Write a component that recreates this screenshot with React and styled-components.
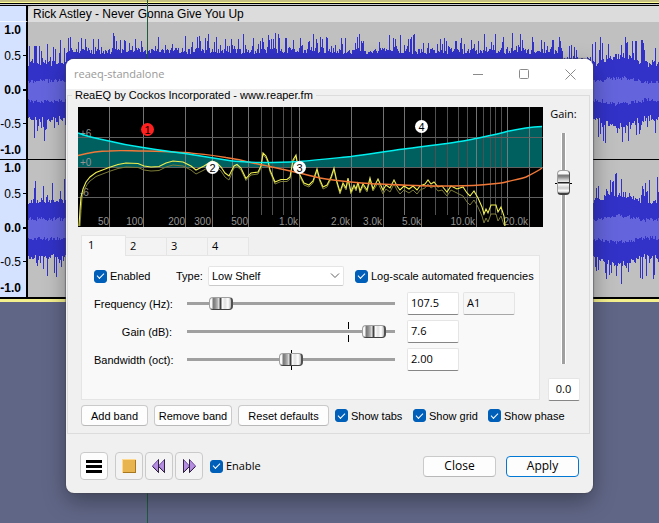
import React, { useState } from "react";
import styled, { createGlobalStyle, css } from "styled-components";

const arial = `"Liberation Sans", Arial, sans-serif`;
const segoe = `"Open Sans", "Noto Sans", sans-serif`;

const GlobalStyle = createGlobalStyle`
  *, *::before, *::after { box-sizing: border-box; }
  body { margin: 0; background: #606686; font-family: ${arial}; font-size: 11px; color: #000; }
  button, input, select { font: inherit; color: inherit; margin: 0; }
`;

/* ---------- Editor behind the dialog ---------- */

const Desktop = styled.main`
  position: relative;
  min-height: 100vh;
  overflow: hidden;
`;

const Track = styled.section`
  border-top: 2px solid #c6c084;
  border-bottom: 3px solid #f4f08e;
  background: #c0c0c0;
`;

const TrackEdge = styled.div`
  height: 4px;
  background: linear-gradient(#ffff96 0 1px, #000 1px 2px, #c8c8d2 2px 3px, #000 3px 4px);
`;

const TrackBody = styled.div`
  display: grid;
  grid-template-columns: 28px 1fr;
  border-bottom: 1px solid #000;
`;

const RulerHead = styled.div`
  background: #d4e1ff;
  border-right: 2px solid #000;
  border-bottom: 1px solid #f4f8ff;
`;

const ClipTitle = styled.h1`
  margin: 0;
  padding-left: 5px;
  height: 16px;
  border-top-left-radius: 5px;
  background: #dcdcdc;
  font: 12px/16px ${arial};
  white-space: nowrap;
`;

const Ruler = styled.div`
  display: grid;
  grid-template-rows: 15px 37px 32px 35px 18px;
  background: #d4e1ff;
  border-right: 2px solid #000;
  border-bottom: 1px solid #000;
  height: 138px;
`;

const Mark = styled.span`
  display: flex;
  align-items: center;
  justify-content: flex-end;
  gap: 2px;
  font: ${(p) => (p.$bold ? "bold" : "normal")} 12px/14px ${arial};
  &::after {
    content: "";
    width: 3px;
    height: ${(p) => (p.$thick ? 2 : 1)}px;
    background: ${(p) => (p.$tick ? "#000" : "transparent")};
  }
`;

const WaveArea = styled.div`
  height: 138px;
  border-bottom: 1px solid #000;
  overflow: hidden;
`;

const WaveSvg = styled.svg`
  display: block;
  width: 100%;
  height: 138px;
`;

const Cursor = styled.div`
  position: absolute;
  left: 147px;
  top: 0;
  bottom: 0;
  width: 1px;
  background: #1e5c3c;
`;

function wavePaths(seed) {
  let s = seed;
  const rnd = () => {
    s = (s * 16807) % 2147483647;
    return s / 2147483647;
  };
  let peaks = "";
  let rms = "";
  for (let x = 0; x < 631; x++) {
    const base = x < 38 ? 25 : x < 535 ? 37 : x < 565 ? 28 : 28 + 4 * Math.sin((x - 575) / 10);
    const spike = x < 38 || x > 565 ? 22 : 16;
    const up = base + rnd() * 6 + (rnd() > 0.65 ? rnd() * spike : 0);
    const down = base + rnd() * 6 + (rnd() > 0.65 ? rnd() * spike : 0);
    const soft = x < 575 ? 8 : 9 + 2 * Math.sin((x - 575) / 10);
    peaks += `M${x}.5 ${Math.round(69 - up)}V${Math.round(69 + down)}`;
    rms += `M${x}.5 ${Math.round(69 - soft - rnd() * 4)}V${Math.round(69 + soft + rnd() * 4)}`;
  }
  return [peaks, rms];
}

function Channel({ seed }) {
  const [peaks, rms] = wavePaths(seed);
  return (
    <>
      <Ruler>
        <Mark $bold>1.0</Mark>
        <Mark $tick>0.5</Mark>
        <Mark $bold $tick $thick>0.0</Mark>
        <Mark $tick>-0.5</Mark>
        <Mark $bold>-1.0</Mark>
      </Ruler>
      <WaveArea>
        <WaveSvg viewBox="0 0 631 138" preserveAspectRatio="none" shapeRendering="crispEdges" aria-hidden="true">
          <path d={peaks} stroke="#3232c8" />
          <path d={rms} stroke="#6464dc" />
        </WaveSvg>
      </WaveArea>
    </>
  );
}

/* ---------- Dialog frame ---------- */

const Dialog = styled.form`
  position: absolute;
  top: 59px;
  left: 66px;
  right: 66px;
  background: #f0f0f0;
  border-radius: 8px;
  overflow: hidden;
  box-shadow: 0 0 1px 1px rgba(70, 70, 80, 0.5), 0 8px 22px rgba(0, 0, 0, 0.35);
`;

const TitleBar = styled.header`
  display: flex;
  align-items: center;
  height: 30px;
  padding-left: 8px;
  background: #fff;
`;

const Title = styled.h2`
  margin: 0;
  flex: 1;
  font: 11px/16px ${segoe};
  color: #999;
`;

const CaptionButton = styled.button`
  display: grid;
  place-items: center;
  width: 46px;
  height: 30px;
  padding: 0;
  border: 0;
  background: none;
  color: #8a8a8a;
`;

const Group = styled.fieldset`
  margin: 0 3px 0 1px;
  padding: 6px 0 7px 4px;
  border: 1px solid #dcdcdc;
  min-width: 0;
`;

const Legend = styled.legend`
  padding: 0 3px;
  line-height: 12px;
`;

const Columns = styled.div`
  display: grid;
  grid-template-columns: minmax(0, 1fr) 46px;
  padding-left: 6px;
`;

const GraphSvg = styled.svg`
  display: block;
  width: 100%;
  height: auto;
  background: #000;
`;

/* ---------- Controls ---------- */

const PushButton = styled.button`
  flex: none;
  height: 21px;
  width: ${(p) => p.$width}px;
  padding: 0;
  border: 1px solid ${(p) => (p.$primary ? "#0078d4" : "#cacaca")};
  border-bottom-color: ${(p) => (p.$primary ? "#0078d4" : "#b8b8b8")};
  border-radius: 4px;
  background: #fdfdfd;
  line-height: 18px;
  white-space: nowrap;
  ${(p) => p.$large && css`font: 12px/18px ${segoe};`}
`;

const ToolButton = styled.button`
  display: grid;
  place-items: center;
  width: 28px;
  height: 28px;
  padding: 0;
  border: 1px solid #cacaca;
  border-radius: 4px;
  background: ${(p) => (p.$plain ? "#fdfdfd" : "#f3f3f3")};
`;

const CheckLabel = styled.label`
  display: flex;
  align-items: center;
  gap: 3px;
  line-height: 14px;
  white-space: nowrap;
  ${(p) => p.$segoe && css`font-family: ${segoe};`}
`;

const CheckInput = styled.input.attrs({ type: "checkbox" })`
  appearance: none;
  display: grid;
  place-items: center;
  flex: none;
  width: 13px;
  height: 13px;
  border: 1px solid #868686;
  border-radius: 3px;
  background: #fff;
  &:checked {
    border-color: #005fb8;
    background: #005fb8;
  }
  &:checked::after {
    content: "";
    width: 7px;
    height: 4px;
    margin-bottom: 2px;
    border: solid #fff;
    border-width: 0 0 1px 1px;
    transform: rotate(-45deg);
  }
`;

function Check({ children, segoe: useSegoe }) {
  return (
    <CheckLabel $segoe={useSegoe}>
      <CheckInput defaultChecked />
      {children}
    </CheckLabel>
  );
}

const TextBox = styled.input`
  width: 100%;
  min-width: 0;
  height: 23px;
  padding: 0 3px 3px;
  border: 1px solid #e5e5e5;
  border-bottom-color: ${(p) => (p.readOnly ? "#a8a8a8" : "#868686")};
  border-radius: 2px;
  background: ${(p) => (p.readOnly ? "#f7f7f7" : "#fff")};
  text-align: ${(p) => (p.$center ? "center" : "left")};
  font: 11px/16px ${segoe};
`;

const Select = styled.select`
  appearance: none;
  height: 20px;
  padding: 0 3px;
  border: 1px solid #e5e5e5;
  border-bottom-color: #cacaca;
  border-radius: 2px;
  background: transparent;
  width: 100%;
`;

const SelectBox = styled.span`
  display: grid;
  align-items: center;
  background: #fff;
  > * { grid-area: 1 / 1; }
  > svg { justify-self: end; margin-right: 4px; pointer-events: none; }
`;

const Slider = styled.input.attrs({ type: "range", min: 0, max: 100, step: "any" })`
  appearance: none;
  width: 100%;
  height: 20px;
  background:
    linear-gradient(#a0a0a0, #a0a0a0) center / 100% 3px no-repeat,
    linear-gradient(#f9f9f9, #f9f9f9) center / 100% 6px no-repeat,
    linear-gradient(${(p) => (p.$tick ? "#000, #000" : "transparent, transparent")})
      ${(p) => p.$tick || "0%"} 0 / 1px 100% no-repeat;
  &::-webkit-slider-thumb {
    appearance: none;
    width: 24px;
    height: 13px;
    border: 1px solid #a0a0a0;
    border-right: 2px solid #505050;
    border-bottom-color: #404040;
    border-radius: 4px;
    background: linear-gradient(90deg, #f8f8f8 0 2px, #777 3px, #8a8a8a 5px, #c0c0c0 8px, #eee 9px, #444 10px 11px, #fff 12px, #e0e0e0 15px, #fff 18px, #bbb 21px);
  }
`;

const VerticalSlider = styled.input.attrs({ type: "range", min: 0, max: 100, step: "any" })`
  appearance: none;
  writing-mode: vertical-lr;
  direction: rtl;
  width: 17px;
  height: 231px;
  margin: 12px 0 14px;
  background:
    linear-gradient(#a0a0a0, #a0a0a0) center / 3px 100% no-repeat,
    linear-gradient(#000, #000) 0 50px / 100% 1px no-repeat,
    linear-gradient(#fff, #fff) center / 5px 100% no-repeat;
  &::-webkit-slider-thumb {
    appearance: none;
    width: 13px;
    height: 25px;
    border: 1px solid #a0a0a0;
    border-right-color: #505050;
    border-bottom: 2px solid #404040;
    border-radius: 4px;
    background: linear-gradient(#f8f8f8 0 3px, #777 4px, #8a8a8a 6px, #d0d0d0 9px, #eee 11px, #222 11px 12px, #fff 13px, #ccc 17px, #fff 20px, #999 22px);
  }
`;

const GainColumn = styled.div`
  display: flex;
  flex-direction: column;
  align-items: center;
  padding-right: 5px;
`;

const GainLabel = styled.label`
  line-height: 14px;
  font-family: ${segoe};
`;

const GainValue = styled.div`
  width: 32px;
`;

/* ---------- Band tabs ---------- */

const Controls = styled.div`
  margin: 8px 3px 0;
`;

const TabList = styled.div`
  display: flex;
  align-items: flex-end;
  height: 20px;
`;

const Tab = styled.button`
  width: ${(p) => (p.$active ? 45 : 42)}px;
  height: ${(p) => (p.$active ? 21 : 18)}px;
  align-self: ${(p) => (p.$active ? "flex-start" : "flex-end")};
  padding: 0 ${(p) => (p.$active ? 6 : 4)}px 2px;
  margin-right: -1px;
  border: 1px solid #e5e5e5;
  border-bottom: 0;
  background: ${(p) => (p.$active ? "#f9f9f9" : "#f3f3f3")};
  z-index: ${(p) => (p.$active ? 1 : 0)};
  text-align: left;
  line-height: 16px;
  font-family: ${segoe};
`;

const Panel = styled.div`
  display: grid;
  grid-template-columns: minmax(0, 1fr);
  gap: 5px;
  padding: 10px 12px 28px;
  border: 1px solid #e5e5e5;
  background: #f9f9f9;
`;

const OptionsRow = styled.div`
  display: grid;
  grid-template-columns: 82px 32px 136px auto;
  align-items: center;
  margin-bottom: 1px;
  > :last-child { margin-left: 11px; }
`;

const FieldRow = styled.div`
  display: grid;
  grid-template-columns: 78px minmax(0, 1fr) 52px 56px;
  align-items: center;
  padding-right: 12px;
  > :nth-child(2) { margin: 0 12px 0 15px; width: auto; }
  > :nth-child(4) { margin-left: 4px; width: 52px; }
`;

const FieldLabel = styled.label`
  text-align: right;
  line-height: 14px;
  white-space: nowrap;
`;

const Actions = styled.div`
  display: flex;
  align-items: center;
  gap: 6px;
  margin-top: 5px;
`;

const ViewOptions = styled.div`
  display: grid;
  grid-template-columns: 78px 75px auto;
`;

const Footer = styled.footer`
  display: flex;
  align-items: center;
  gap: 7px;
  padding: 18px 14px 13px;
`;

const Transport = styled.div`
  display: flex;
  gap: 2px;
`;

const DialogButtons = styled.div`
  display: flex;
  gap: 10px;
  margin-left: auto;
`;

/* ---------- Equalizer graph ---------- */

const majorLines = [31, 65, 107, 134, 170, 221, 273, 305, 343, 398, 451];
const midLines = [154, 326, 429];
const minorLines = [183, 194, 205, 213, 357, 369, 380, 389, 405, 412, 417, 423];
const freqLabels = [
  [31, "50"], [65, "100"], [107, "200"], [133, "300"], [170, "500"], [220, "1.0k"],
  [272, "2.0k"], [304, "3.0k"], [343, "5.0k"], [397, "10.0k"], [450, "20.0k"],
];
const nodes = [
  [69, 22, "1", "#ff2020"], [134, 60, "2", "#fff"], [221, 60, "3", "#fff"], [343, 19, "4", "#fff"],
];
const phase = "M0 26C10 30 20 32 31 34C43 37 54 39 65 40.500C80 43 94 45 107 46.500C122 49 136 51 148 53C166 56 192 56 221 54.500C240 53 258 51 273 49.500C292 47 310 44 326 42C342 40 356 38 369 36.500C380 35 390 33 398 31.500C410 29 420 27 429 24.500C440 22 452 20 464 19.500";
const gainCurve = "M0 48.500C10 46 20 44 31 44C43 43 54 44 65 44C80 44 94 45 107 45.500C122 47 136 48 148 50.500C158 52 164 53 170 55C178 57 186 58 194 60C204 62 212 64 221 66C230 68 236 70 242 71C253 73 263 74 273 75C283 76 292 77 302 77C322 78 342 79 362 79C376 79 390 79 402 78C412 77 420 77 428 75C436 73 442 72 448 70C454 67 460 64 464 61";
const spectrum = [
  [1, 119], [2, 103], [3, 90], [5, 82], [8, 75], [12, 70], [18, 65.5], [31, 60.500], [40, 57.5], [48, 56], [60, 56.5], [66, 59], [73, 60], [81, 59.5],
  [88, 56], [95, 54], [105, 55], [113, 59], [118, 63], [126, 59], [134, 54], [139, 56], [143, 60], [147, 66], [151, 69], [156, 59], [159, 57.5], [163, 61],
  [168, 71.5], [173, 66], [180, 65], [183, 59], [185, 46], [188, 49], [190, 54], [192, 63], [197, 75], [203, 72.500], [209, 72.5], [212, 70], [215, 53], [218, 48],
  [220, 60], [222, 68], [226, 76], [231, 78], [235, 74], [239, 62], [242, 73], [245, 80], [249, 78], [253, 70], [256, 61], [259, 75], [262, 85], [265, 76],
  [268, 81], [270, 71], [273, 85], [276, 78], [278, 82], [280, 75], [282, 84], [285, 77], [289, 83], [292, 71], [295, 82], [300, 72], [305, 83], [308, 78],
  [312, 81], [316, 73], [319, 79], [322, 83], [326, 79], [331, 82], [335, 79], [339, 83], [342, 79], [347, 77], [350, 73], [353, 77], [356, 75], [360, 80],
  [364, 79], [369, 85], [373, 79], [379, 82], [385, 80], [389, 86], [392, 89], [396, 84], [400, 91], [404, 100], [406, 107], [408, 102], [410, 106], [413, 98],
  [418, 98], [420, 105], [423, 100], [426, 109], [427, 119],
];
const toPoints = (list) => list.map(([x, y]) => `${x},${y}`).join(" ");
const shaded = spectrum.map(([x, y]) => {
  const drop = x < 10 ? x / 3 : x < 155 ? 4 : x < 300 ? 2 : x < 385 ? 4 : 9;
  return [x < 10 ? x + 1 : x, Math.min(119, y + drop)];
});

function Graph() {
  return (
    <GraphSvg viewBox="0 0 465 120" role="img" aria-label="Equalizer curve">
      <path d={`${phase}V60H0Z`} fill="#006060" />
      <g shapeRendering="crispEdges" fill="none">
        <path d={majorLines.map((x) => `M${x}.5 0V120`).join("")} stroke="#808080" strokeOpacity=".9" />
        <path d={midLines.map((x) => `M${x}.5 0V108`).join("")} stroke="#808080" strokeOpacity=".9" />
        <path d={minorLines.map((x) => `M${x}.5 0V108`).join("")} stroke="#505050" />
        <path d="M0 30.500H465M0 60.500H465M0 90.500H465" stroke="#606060" />
      </g>
      <g fontFamily="Liberation Sans, Arial, sans-serif" fontSize="10" fill="#949494">
        <text x="2" y="30">+6</text>
        <text x="2" y="59">+0</text>
        <text x="2" y="89">-6</text>
        {freqLabels.map(([x, t]) => (
          <text key={t} x={x} y="118" textAnchor="end">{t}</text>
        ))}
      </g>
      <g fill="none">
        <polyline points={toPoints(shaded)} stroke="#7c7c38" />
        <polyline points={toPoints(spectrum)} stroke="#f0f050" strokeWidth="1.1" />
        <path d={gainCurve} stroke="#f07838" strokeWidth="1.4" />
        <path d={phase} stroke="#00f0f0" strokeWidth="1.4" />
      </g>
      <g fontFamily="Liberation Sans, Arial, sans-serif" fontSize="11" textAnchor="middle">
        {nodes.map(([x, y, n, fill]) => (
          <g key={n}>
            <circle cx={x + 0.5} cy={y + 0.5} r="6.5" fill={fill} />
            <text x={x + 0.5} y={y + 4.5} fill="#000">{n}</text>
          </g>
        ))}
      </g>
    </GraphSvg>
  );
}

const SkipIcon = ({ flip }) => (
  <svg width="14" height="16" viewBox="0 0 14 16" aria-hidden="true">
    <g transform={flip ? "translate(14 0) scale(-1 1)" : undefined}>
      <path d="M6.500 1.500V14.500L.5 8ZM12.500 1.500V14.500L6.500 8Z" fill="#b48ce0" stroke="#7050a0" />
      <path d="M6.500 1.500V14.500M12.500 1.500V14.500M.5 8.500L6.500 14.500M6.500 8.500L12.500 14.500" stroke="#302040" fill="none" />
    </g>
  </svg>
);

function Field({ id, label, value, tick, text, note }) {
  return (
    <FieldRow>
      <FieldLabel htmlFor={id}>{label}</FieldLabel>
      <Slider id={id} defaultValue={value} $tick={tick} />
      <TextBox defaultValue={text} aria-label={`${label} value`} />
      {note && <TextBox readOnly value={note} aria-label="Note" />}
    </FieldRow>
  );
}

export default function App() {
  const [band, setBand] = useState(1);
  return (
    <Desktop>
      <GlobalStyle />
      <Track>
        <TrackEdge />
        <TrackBody>
          <RulerHead />
          <ClipTitle>Rick Astley - Never Gonna Give You Up</ClipTitle>
          <Channel seed={1987} />
          <Channel seed={727} />
        </TrackBody>
      </Track>
      <Cursor />

      <Dialog role="dialog" aria-labelledby="dialog-title" onSubmit={(e) => e.preventDefault()}>
        <TitleBar>
          <Title id="dialog-title">reaeq-standalone</Title>
          <CaptionButton type="button" aria-label="Minimize">
            <svg width="11" height="11" fill="none" stroke="currentColor"><path d="M0 5.500H10" /></svg>
          </CaptionButton>
          <CaptionButton type="button" aria-label="Maximize">
            <svg width="11" height="11" fill="none" stroke="currentColor"><rect x=".5" y=".5" width="9" height="9" rx="1" /></svg>
          </CaptionButton>
          <CaptionButton type="button" aria-label="Close window">
            <svg width="11" height="11" fill="none" stroke="currentColor"><path d="M.5 .5L10.500 10.500M10.500 .5L.5 10.500" /></svg>
          </CaptionButton>
        </TitleBar>

        <Group>
          <Legend>ReaEQ by Cockos Incorporated - www.reaper.fm</Legend>
          <Columns>
            <div>
              <Graph />
              <Controls>
                <TabList role="tablist" aria-label="Bands">
                  {[1, 2, 3, 4].map((n) => (
                    <Tab key={n} type="button" role="tab" aria-selected={band === n} $active={band === n} onClick={() => setBand(n)}>
                      {n}
                    </Tab>
                  ))}
                </TabList>
                <Panel role="tabpanel">
                  <OptionsRow>
                    <Check>Enabled</Check>
                    <label htmlFor="type">Type:</label>
                    <SelectBox>
                      <Select id="type" defaultValue="Low Shelf">
                        <option>Low Shelf</option>
                        <option>High Shelf</option>
                        <option>Band</option>
                      </Select>
                      <svg width="10" height="6" fill="none" stroke="#606060" aria-hidden="true"><path d="M1 .5L5 4.500L9 .5" /></svg>
                    </SelectBox>
                    <Check>Log-scale automated frequencies</Check>
                  </OptionsRow>
                  <Field id="frequency" label="Frequency (Hz):" value={12} text="107.5" note="A1" />
                  <Field id="gain" label="Gain (dB):" value={95} tick="78%" text="7.6" />
                  <Field id="bandwidth" label="Bandwidth (oct):" value={50} tick="50%" text="2.00" />
                </Panel>
                <Actions>
                  <PushButton type="button" $width={67}>Add band</PushButton>
                  <PushButton type="button" $width={78}>Remove band</PushButton>
                  <PushButton type="button" $width={91}>Reset defaults</PushButton>
                  <ViewOptions>
                    <Check>Show tabs</Check>
                    <Check>Show grid</Check>
                    <Check>Show phase</Check>
                  </ViewOptions>
                </Actions>
              </Controls>
            </div>
            <GainColumn>
              <GainLabel htmlFor="master">Gain:</GainLabel>
              <VerticalSlider id="master" defaultValue={82} />
              <GainValue>
                <TextBox defaultValue="0.0" $center aria-label="Gain value" />
              </GainValue>
            </GainColumn>
          </Columns>
        </Group>

        <Footer>
          <ToolButton type="button" $plain aria-label="Manage">
            <svg width="16" height="14" shapeRendering="crispEdges" aria-hidden="true"><path d="M0 2H16M0 7H16M0 12H16" stroke="#000" strokeWidth="3" /></svg>
          </ToolButton>
          <Transport>
            <ToolButton type="button" aria-label="Stop">
              <svg width="14" height="14" shapeRendering="crispEdges" aria-hidden="true">
                <rect width="14" height="14" fill="#a87820" />
                <path d="M0 0H14L12 2H2V12L0 14Z" fill="#ffd890" />
                <rect x="1" y="1" width="12" height="12" fill="#e8b450" />
              </svg>
            </ToolButton>
            <ToolButton type="button" aria-label="Rewind"><SkipIcon /></ToolButton>
            <ToolButton type="button" aria-label="Fast forward"><SkipIcon flip /></ToolButton>
          </Transport>
          <Check segoe>Enable</Check>
          <DialogButtons>
            <PushButton type="button" $large $width={73}>Close</PushButton>
            <PushButton type="submit" $large $primary $width={73}>Apply</PushButton>
          </DialogButtons>
        </Footer>
      </Dialog>
    </Desktop>
  );
}
